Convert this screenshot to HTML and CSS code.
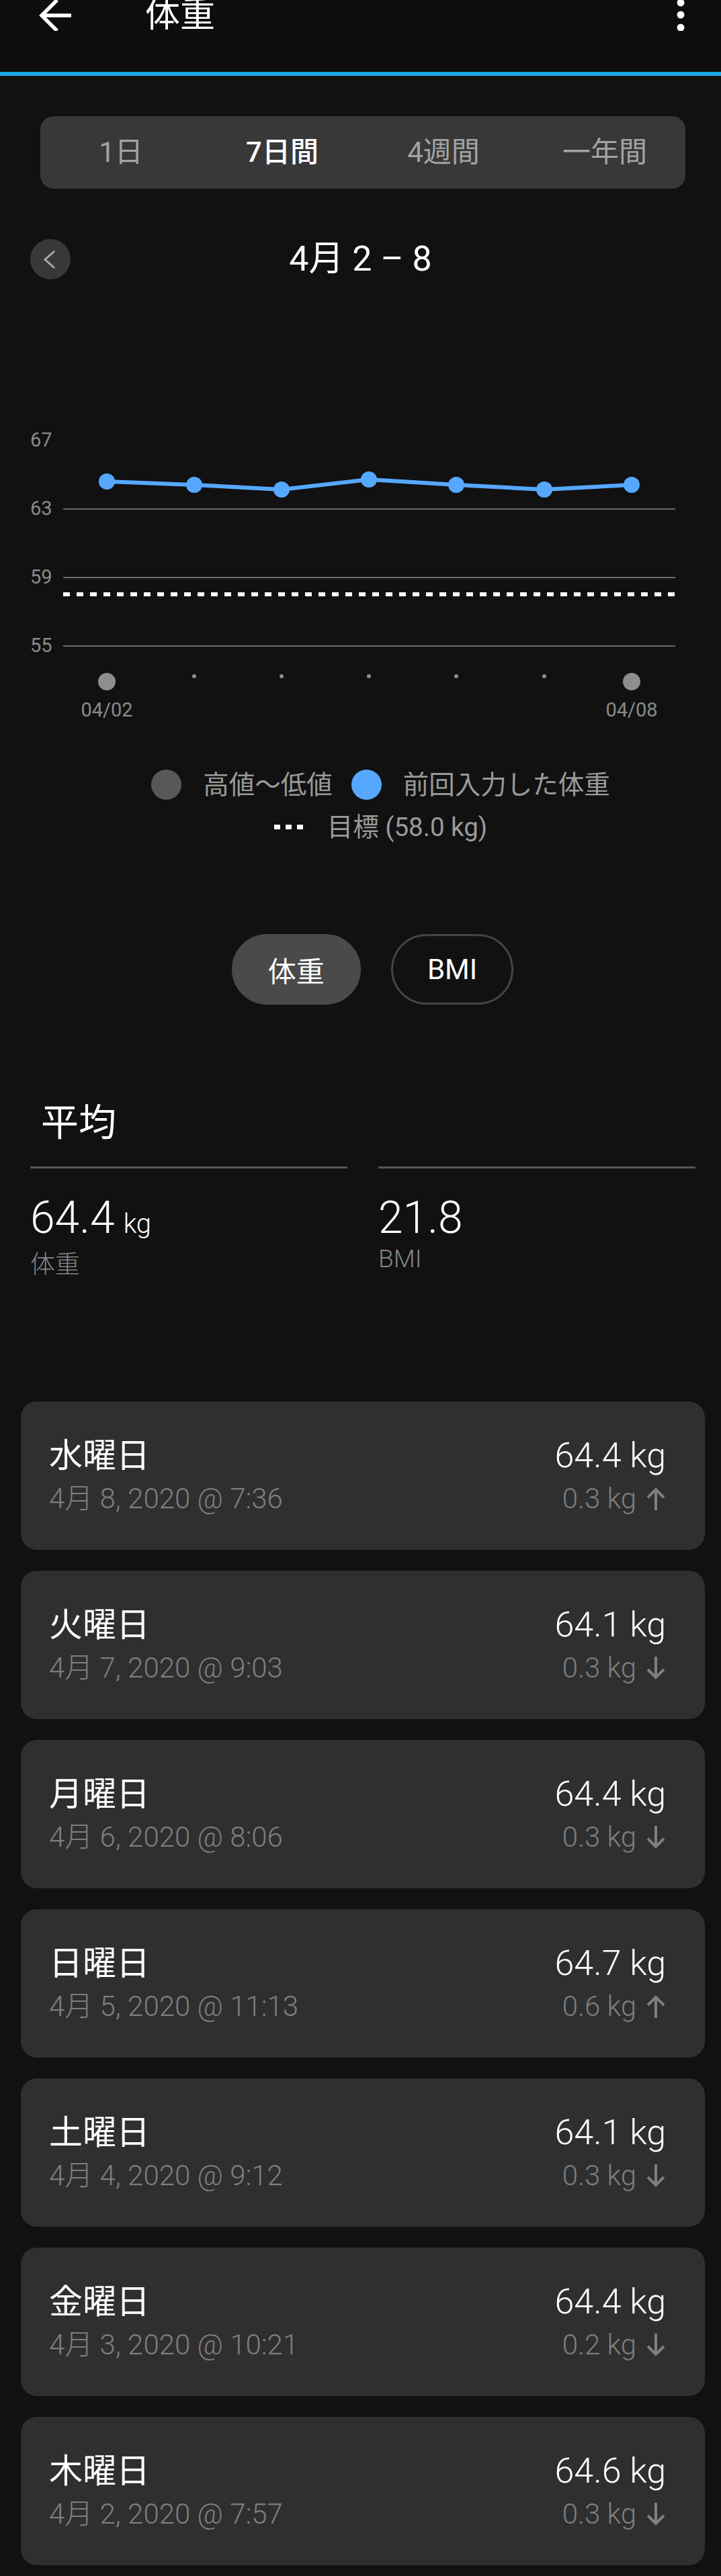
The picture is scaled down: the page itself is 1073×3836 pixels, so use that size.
FILE: index.html
```html
<!DOCTYPE html>
<html lang="ja">
<head>
<meta charset="utf-8">
<title>体重</title>
<link rel="stylesheet" href="styles.css">
</head>
<body>
<header class="appbar">
  <div class="appbar-row">
    <svg class="icon-back" viewBox="0 0 50 46" width="50" height="46"><path d="M48 23 H4 M27 0 L4 23 L27 46" fill="none" stroke="#fff" stroke-width="5.5"/></svg>
    <h1 class="title">体重</h1>
    <svg class="icon-more" viewBox="0 0 12 46" width="12" height="46"><circle cx="6" cy="4" r="5.5" fill="#fff"/><circle cx="6" cy="22" r="5.5" fill="#fff"/><circle cx="6" cy="41" r="5.5" fill="#fff"/></svg>
  </div>
</header>
<main class="content">
  <div class="range-tabs">
    <span class="tab">1日</span>
    <span class="tab active">7日間</span>
    <span class="tab">4週間</span>
    <span class="tab">一年間</span>
  </div>

  <div class="date-nav">
    <button class="nav-prev"><svg viewBox="0 0 60 60" width="60" height="60"><path d="M36 18 L22 30.5 L36 43" fill="none" stroke="#a8a8a8" stroke-width="3"/></svg></button>
    <div class="date-title">4月 2 – 8</div>
    <span></span>
  </div>

  <div class="chart">
    <svg viewBox="0 416 1073 674" width="1073" height="674">
      <g class="axis-labels" font-family="Roboto, sans-serif" font-size="29" fill="#8a8a8a">
        <text x="45" y="665">67</text>
        <text x="45" y="767">63</text>
        <text x="45" y="869">59</text>
        <text x="45" y="971">55</text>
      </g>
      <g stroke="#6a6a6a" stroke-width="2">
        <line x1="94" y1="758" x2="1005" y2="758"/>
        <line x1="94" y1="860" x2="1005" y2="860"/>
        <line x1="94" y1="962" x2="1005" y2="962"/>
      </g>
      <line x1="94" y1="885" x2="1005" y2="885" stroke="#fff" stroke-width="6" stroke-dasharray="10 10"/>
      <polyline points="159,717 289,722 419,729 549,714 679,722 810,729 940,722" fill="none" stroke="#56a8ff" stroke-width="6" stroke-linejoin="round"/>
      <g fill="#56a8ff">
        <circle cx="159" cy="717" r="12"/>
        <circle cx="289" cy="722" r="12"/>
        <circle cx="419" cy="729" r="12"/>
        <circle cx="549" cy="714" r="12"/>
        <circle cx="679" cy="722" r="12"/>
        <circle cx="810" cy="729" r="12"/>
        <circle cx="940" cy="722" r="12"/>
      </g>
      <g fill="#8e8e8e">
        <circle cx="159" cy="1015" r="13"/>
        <circle cx="289" cy="1007" r="3"/>
        <circle cx="419" cy="1007" r="3"/>
        <circle cx="549" cy="1007" r="3"/>
        <circle cx="679" cy="1007" r="3"/>
        <circle cx="810" cy="1007" r="3"/>
        <circle cx="940" cy="1015" r="13"/>
      </g>
      <g font-family="Roboto, sans-serif" font-size="29" fill="#8a8a8a" text-anchor="middle">
        <text x="159" y="1067">04/02</text>
        <text x="940" y="1067">04/08</text>
      </g>
    </svg>
  </div>

  <div class="legend">
    <div class="legend-row">
      <span class="legend-item"><span class="dot dot-gray"></span>高値〜低値</span>
      <span class="legend-item"><span class="dot dot-blue"></span>前回入力した体重</span>
    </div>
    <div class="legend-row">
      <span class="legend-item goal"><span class="goal-dots"><i></i><i></i><i></i></span>目標 (58.0 kg)</span>
    </div>
  </div>

  <div class="toggle">
    <button class="pill active">体重</button>
    <button class="pill">BMI</button>
  </div>

  <section class="average">
    <h2 class="average-title">平均</h2>
    <div class="stats">
      <div class="stat">
        <div class="stat-value">64.4<span class="unit">kg</span></div>
        <div class="stat-label">体重</div>
      </div>
      <div class="stat">
        <div class="stat-value">21.8</div>
        <div class="stat-label">BMI</div>
      </div>
    </div>
  </section>

  <ul class="entries">
    <li class="entry">
      <div class="entry-left"><div class="entry-day">水曜日</div><div class="entry-date">4月 8, 2020 @ 7:36</div></div>
      <div class="entry-right"><div class="entry-weight">64.4 kg</div><div class="entry-change">0.3 kg<svg class="arrow" viewBox="0 0 30 34" width="30" height="34"><path d="M15 3 V34 M3 15 L15 3 L27 15" fill="none" stroke="#808080" stroke-width="4"/></svg></div></div>
    </li>
    <li class="entry">
      <div class="entry-left"><div class="entry-day">火曜日</div><div class="entry-date">4月 7, 2020 @ 9:03</div></div>
      <div class="entry-right"><div class="entry-weight">64.1 kg</div><div class="entry-change">0.3 kg<svg class="arrow" viewBox="0 0 30 34" width="30" height="34"><path d="M15 0 V31 M3 19 L15 31 L27 19" fill="none" stroke="#808080" stroke-width="4"/></svg></div></div>
    </li>
    <li class="entry">
      <div class="entry-left"><div class="entry-day">月曜日</div><div class="entry-date">4月 6, 2020 @ 8:06</div></div>
      <div class="entry-right"><div class="entry-weight">64.4 kg</div><div class="entry-change">0.3 kg<svg class="arrow" viewBox="0 0 30 34" width="30" height="34"><path d="M15 0 V31 M3 19 L15 31 L27 19" fill="none" stroke="#808080" stroke-width="4"/></svg></div></div>
    </li>
    <li class="entry">
      <div class="entry-left"><div class="entry-day">日曜日</div><div class="entry-date">4月 5, 2020 @ 11:13</div></div>
      <div class="entry-right"><div class="entry-weight">64.7 kg</div><div class="entry-change">0.6 kg<svg class="arrow" viewBox="0 0 30 34" width="30" height="34"><path d="M15 3 V34 M3 15 L15 3 L27 15" fill="none" stroke="#808080" stroke-width="4"/></svg></div></div>
    </li>
    <li class="entry">
      <div class="entry-left"><div class="entry-day">土曜日</div><div class="entry-date">4月 4, 2020 @ 9:12</div></div>
      <div class="entry-right"><div class="entry-weight">64.1 kg</div><div class="entry-change">0.3 kg<svg class="arrow" viewBox="0 0 30 34" width="30" height="34"><path d="M15 0 V31 M3 19 L15 31 L27 19" fill="none" stroke="#808080" stroke-width="4"/></svg></div></div>
    </li>
    <li class="entry">
      <div class="entry-left"><div class="entry-day">金曜日</div><div class="entry-date">4月 3, 2020 @ 10:21</div></div>
      <div class="entry-right"><div class="entry-weight">64.4 kg</div><div class="entry-change">0.2 kg<svg class="arrow" viewBox="0 0 30 34" width="30" height="34"><path d="M15 0 V31 M3 19 L15 31 L27 19" fill="none" stroke="#808080" stroke-width="4"/></svg></div></div>
    </li>
    <li class="entry">
      <div class="entry-left"><div class="entry-day">木曜日</div><div class="entry-date">4月 2, 2020 @ 7:57</div></div>
      <div class="entry-right"><div class="entry-weight">64.6 kg</div><div class="entry-change">0.3 kg<svg class="arrow" viewBox="0 0 30 34" width="30" height="34"><path d="M15 0 V31 M3 19 L15 31 L27 19" fill="none" stroke="#808080" stroke-width="4"/></svg></div></div>
    </li>
  </ul>
</main>
</body>
</html>
```

FILE: styles.css
```css
html, body {
  margin: 0;
  padding: 0;
}
body {
  width: 1073px;
  background: #111111;
  color: #ffffff;
  font-family: Roboto, "Noto Sans CJK JP", sans-serif;
}

/* App bar */
.appbar {
  height: 107px;
  background: #0d0d0d;
  border-bottom: 6px solid #1ba7e6;
}
.appbar-row {
  height: 46px;
  display: flex;
  align-items: center;
  padding: 0 54px 0 58px;
}
.icon-back {
  display: block;
  flex: none;
}
.title {
  margin: 0 0 0 108px;
  font-size: 52px;
  line-height: 46px;
  font-weight: 400;
}
.icon-more {
  display: block;
  margin-left: auto;
}

/* Range tabs */
.range-tabs {
  margin: 60px 53px 0 60px;
  height: 108px;
  background: #383838;
  border-radius: 20px;
  display: grid;
  grid-template-columns: repeat(4, 1fr);
  align-items: center;
}
.tab {
  text-align: center;
  font-size: 42px;
  line-height: 50px;
  color: #a3a3a3;
}
.tab.active {
  color: #ffffff;
  font-weight: 500;
}

/* Date nav */
.date-nav {
  display: grid;
  grid-template-columns: 60px 1fr 60px;
  align-items: center;
  height: 60px;
  margin-top: 75px;
  padding: 0 45px;
}
.nav-prev {
  width: 60px;
  height: 60px;
  padding: 0;
  border: none;
  border-radius: 50%;
  background: #383838;
}
.nav-prev svg {
  display: block;
}
.date-title {
  text-align: center;
  font-size: 52px;
  line-height: 60px;
}

/* Chart */
.chart svg {
  display: block;
}

/* Legend */
.legend {
  margin-top: 56px;
  padding-left: 60px;
  display: flex;
  flex-direction: column;
  align-items: center;
  gap: 20px;
  color: #9a9a9a;
  font-size: 38.5px;
}
.legend-row {
  display: flex;
  align-items: center;
  gap: 28px;
  height: 45px;
}
.legend-row + .legend-row {
  height: 40px;
}
.legend-item {
  display: flex;
  align-items: center;
  gap: 32px;
  line-height: 45px;
}
.dot {
  width: 45px;
  height: 45px;
  border-radius: 50%;
  flex: none;
}
.dot-gray {
  background: #585858;
}
.dot-blue {
  background: #56a8ff;
}
.goal {
  gap: 36px;
}
.goal-dots {
  display: flex;
  gap: 8px;
}
.goal-dots i {
  display: block;
  width: 9px;
  height: 7px;
  background: #ffffff;
}

/* Toggle */
.toggle {
  margin-top: 140px;
  display: flex;
  justify-content: center;
  gap: 45px;
  padding-left: 36px;
}
.pill {
  height: 105px;
  padding: 0 51px;
  border: 3px solid #454545;
  border-radius: 53px;
  background: transparent;
  color: #ffffff;
  font-family: Roboto, "Noto Sans CJK JP", sans-serif;
  font-size: 42px;
}
.pill.active {
  background: #4a4a4a;
  border-color: #4a4a4a;
}

/* Average */
.average-title {
  margin: 146px 0 0 0;
  padding-left: 61px;
  font-size: 56px;
  line-height: 60px;
  font-weight: 400;
}
.stats {
  margin-top: 35px;
  padding: 0 38px 0 45px;
  display: grid;
  grid-template-columns: 1fr 1fr;
  gap: 46px;
}
.stat {
  border-top: 3px solid #555555;
}
.stat-value {
  margin-top: 41px;
  font-size: 66px;
  line-height: 66px;
  font-weight: 300;
}
.unit {
  font-size: 40px;
  margin-left: 13px;
}
.stat-label {
  margin-top: 6px;
  font-size: 37px;
  line-height: 44px;
  color: #868686;
  font-weight: 300;
}

/* Entries */
.entries {
  list-style: none;
  margin: 181px 24px 0 31px;
  padding: 0;
  display: flex;
  flex-direction: column;
  gap: 31px;
}
.entry {
  height: 221px;
  box-sizing: border-box;
  background: #2f2f2f;
  border-radius: 24px;
  display: flex;
  justify-content: space-between;
  align-items: center;
  padding: 0 58px 0 42px;
}
.entry-left,
.entry-right {
  display: flex;
  flex-direction: column;
  gap: 9px;
}
.entry-right {
  align-items: flex-end;
}
.entry-day {
  font-size: 50px;
  line-height: 60px;
}
.entry-date {
  font-size: 42px;
  line-height: 50px;
  color: #7e7e7e;
  font-weight: 300;
}
.entry-weight {
  font-size: 52px;
  line-height: 60px;
  font-weight: 300;
}
.entry-change {
  display: flex;
  align-items: center;
  gap: 14px;
  font-size: 42px;
  line-height: 50px;
  color: #7e7e7e;
  font-weight: 300;
}
.arrow {
  display: block;
}
```
